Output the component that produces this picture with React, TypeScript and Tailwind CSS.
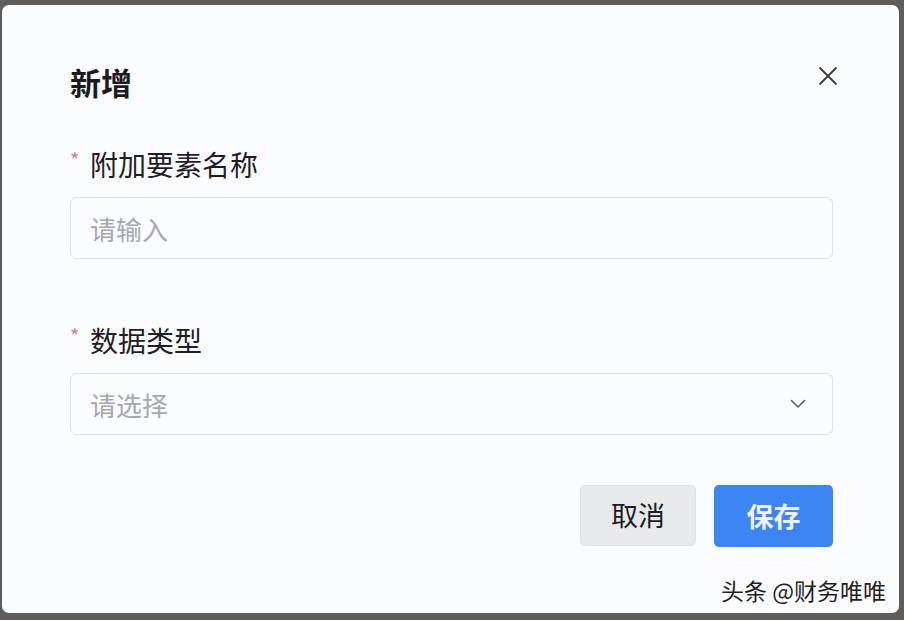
import React from "react";

const font = { fontFamily: '"Noto Sans CJK SC", "Noto Sans", sans-serif' };

export default function App() {
  return (
    <div className="w-[904px] h-[620px] bg-[#5e5d5b] pt-[5px] pl-[2px] overflow-hidden" style={font}>
      <div className="w-[897px] h-[608px] bg-[#fbfcfe] rounded-[7px] flex flex-col pt-[56px] pl-[68px] pr-[66px] relative">
        {/* header */}
        <div className="flex items-start justify-between h-[42px]">
          <h1 className="text-[31px] leading-[42px] font-bold text-[#1b1a22]">新增</h1>
          <button className="w-[20px] h-[20px] mt-[5px] mr-[-5px] flex items-center justify-center text-[#3a3940]">
            <svg width="20" height="20" viewBox="0 0 20 20" fill="none" stroke="currentColor" strokeWidth="1.8" strokeLinecap="round">
              <path d="M2 2 L18 18 M18 2 L2 18" />
            </svg>
          </button>
        </div>

        {/* field 1 */}
        <div className="mt-[43px] flex items-center h-[36px]">
          <span className="text-[#e8787a] text-[20px] leading-none w-[20px] -mt-[8px]">*</span>
          <span className="text-[28px] leading-[36px] text-[#1f1d27]">附加要素名称</span>
        </div>
        <div className="mt-[15px] h-[62px] border border-[#dde1e8] rounded-[6px] bg-[#fbfcfe] flex items-center px-[19px]">
          <span className="text-[26px] text-[#a6a8b0]">请输入</span>
        </div>

        {/* field 2 */}
        <div className="mt-[63px] flex items-center h-[36px]">
          <span className="text-[#e8787a] text-[20px] leading-none w-[20px] -mt-[8px]">*</span>
          <span className="text-[28px] leading-[36px] text-[#1f1d27]">数据类型</span>
        </div>
        <div className="mt-[15px] h-[62px] border border-[#dde1e8] rounded-[6px] bg-[#fbfcfe] flex items-center justify-between pl-[19px] pr-[26px]">
          <span className="text-[26px] text-[#a6a8b0]">请选择</span>
          <svg width="16" height="10" viewBox="0 0 16 10" fill="none" stroke="#5c5b63" strokeWidth="1.6" strokeLinecap="round" strokeLinejoin="round">
            <path d="M1.5 1.5 L8 8 L14.5 1.5" />
          </svg>
        </div>

        {/* actions */}
        <div className="mt-[50px] flex justify-end gap-[18px]">
          <button className="w-[116px] h-[61px] rounded-[5px] bg-[#e8e9eb] border border-[#e0e1e4] text-[27px] text-[#1d1b24]">取消</button>
          <button className="w-[119px] h-[62px] rounded-[5px] bg-[#3c85f2] text-[27px] font-bold text-[#eef4ff]">保存</button>
        </div>

        <div className="absolute right-[13px] bottom-[9px] text-[23px] leading-[28px] text-[#1f1f22]">头条 @财务唯唯</div>
      </div>
    </div>
  );
}
